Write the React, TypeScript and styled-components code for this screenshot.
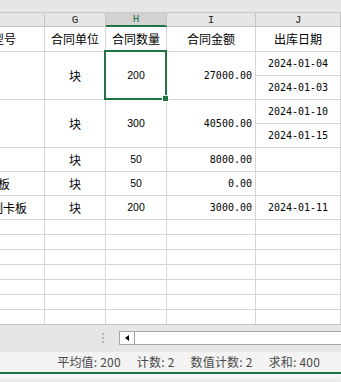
import styled, { createGlobalStyle } from "styled-components"

const GlobalStyle = createGlobalStyle`
    html, body {
        margin: 0;
        padding: 0;
        background: #ffffff;
    }
    body {
        overflow: hidden;
    }
`

const Window = styled.div`
    width: 341px;
    height: 382px;
    display: flex;
    flex-direction: column;
    overflow: hidden;
    background: #ffffff;
`

const TopStrip = styled.div`
    flex: none;
    height: 12px;
    background: #e6e6e6;
    border-bottom: 1px solid #c8c8c8;
`

const GridViewport = styled.div`
    flex: 1;
    min-height: 0;
    overflow: hidden;
`

const Sheet = styled.div`
    display: grid;
    grid-template-columns: 80px 61px 61px 89px 85px;
    grid-template-rows: 14px 25px repeat(7, 24px) repeat(8, 15px);
    margin-left: -35px;
`

const ColHead = styled.div<{ $active?: boolean }>`
    box-sizing: border-box;
    display: flex;
    align-items: center;
    justify-content: center;
    padding-top: 1px;
    background: ${p => (p.$active ? "#d2d2d2" : "#e6e6e6")};
    color: ${p => (p.$active ? "#217346" : "#262626")};
    border-right: 1px solid #c4c4c4;
    border-bottom: ${p => (p.$active ? "2px solid #217346" : "1px solid #c4c4c4")};
    font-family: "Liberation Mono", monospace;
    font-size: 11px;
    line-height: 1;
`

type Kind = "cjk" | "mono" | "sans"

const fonts: Record<Kind, string> = {
    cjk: `12px "Noto Sans CJK SC", sans-serif`,
    mono: `10px "DejaVu Sans Mono", monospace`,
    sans: `10.5px "Liberation Sans", sans-serif`,
}

const Cell = styled.div<{ $rows?: number; $align?: "start" | "center" | "end"; $kind?: Kind; $inset?: number }>`
    box-sizing: border-box;
    grid-row: span ${p => p.$rows ?? 1};
    display: flex;
    align-items: center;
    justify-content: ${p => (p.$align === "end" ? "flex-end" : p.$align === "start" ? "flex-start" : "center")};
    padding: 0 ${p => p.$inset ?? 3}px 0 3px;
    border-right: 1px solid #d4d4d4;
    border-bottom: 1px solid #d4d4d4;
    white-space: nowrap;
    overflow: hidden;
    color: #000000;
    font: ${p => fonts[p.$kind ?? "cjk"]};
    line-height: 1;
`

const SelectedCell = styled(Cell)`
    position: relative;
    z-index: 2;
    overflow: visible;

    &::after {
        content: "";
        position: absolute;
        left: -2px;
        top: -2px;
        right: -1px;
        bottom: -1px;
        border: 2px solid #217346;
        pointer-events: none;
    }

    &::before {
        content: "";
        position: absolute;
        right: -2px;
        bottom: -2px;
        width: 5px;
        height: 5px;
        background: #217346;
        box-shadow: 0 0 0 1px #ffffff;
        z-index: 1;
    }
`

const ScrollArea = styled.div`
    flex: none;
    box-sizing: border-box;
    height: 28px;
    display: flex;
    align-items: flex-start;
    padding: 6px 0 0 102px;
    gap: 15px;
    background: #e6e6e6;
    border-top: 1px solid #c4c4c4;
`

const Splitter = styled.div`
    flex: none;
    width: 2px;
    height: 10px;
    margin-top: 2px;
    background: linear-gradient(
        to bottom,
        #b4b4b4 0 2px,
        transparent 2px 4px,
        #b4b4b4 4px 6px,
        transparent 6px 8px,
        #b4b4b4 8px 10px
    );
`

const ScrollTrack = styled.div`
    flex: 1;
    box-sizing: border-box;
    height: 14px;
    display: flex;
    background: #ffffff;
    border: 1px solid #a6a6a6;
    border-right: none;
`

const ArrowButton = styled.div`
    flex: none;
    width: 14px;
    display: flex;
    align-items: center;
    justify-content: center;
    border-right: 1px solid #a6a6a6;

    &::before {
        content: "";
        width: 0;
        height: 0;
        border-top: 3px solid transparent;
        border-bottom: 3px solid transparent;
        border-right: 4px solid #000000;
    }
`

const StatusBar = styled.div`
    flex: none;
    height: 20px;
    display: flex;
    align-items: center;
    justify-content: flex-end;
    gap: 16px;
    padding-right: 21px;
    background: #f3f3f3;
    color: #4a4a4a;
    font-family: "Noto Sans CJK SC", sans-serif;
    font-size: 12px;
    letter-spacing: 0.2px;
    line-height: 1;
`

const BottomEdge = styled.div`
    flex: none;
    height: 8px;
    border-top: 2px solid #217346;
    background: linear-gradient(to bottom, #fbfbfb, #e9e9e9);
`

const emptyCells = Array.from({ length: 8 * 5 }, (_, i) => i)

export default function App() {
    return (
        <>
            <GlobalStyle />
            <Window>
                <TopStrip />
                <GridViewport>
                    <Sheet>
                        <ColHead />
                        <ColHead>G</ColHead>
                        <ColHead $active>H</ColHead>
                        <ColHead>I</ColHead>
                        <ColHead>J</ColHead>

                        <Cell $inset={28} $align="end">规格型号</Cell>
                        <Cell>合同单位</Cell>
                        <Cell>合同数量</Cell>
                        <Cell>合同金额</Cell>
                        <Cell>出库日期</Cell>

                        <Cell $rows={2} />
                        <Cell $rows={2}>块</Cell>
                        <SelectedCell $rows={2} $kind="sans">200</SelectedCell>
                        <Cell $rows={2} $kind="mono" $align="end">27000.00</Cell>
                        <Cell $kind="mono">2024-01-04</Cell>
                        <Cell $kind="mono">2024-01-03</Cell>

                        <Cell $rows={2} />
                        <Cell $rows={2}>块</Cell>
                        <Cell $rows={2} $kind="sans">300</Cell>
                        <Cell $rows={2} $kind="mono" $align="end">40500.00</Cell>
                        <Cell $kind="mono">2024-01-10</Cell>
                        <Cell $kind="mono">2024-01-15</Cell>

                        <Cell />
                        <Cell>块</Cell>
                        <Cell $kind="sans">50</Cell>
                        <Cell $kind="mono" $align="end">8000.00</Cell>
                        <Cell />

                        <Cell $inset={34} $align="end">塑料托板</Cell>
                        <Cell>块</Cell>
                        <Cell $kind="sans">50</Cell>
                        <Cell $kind="mono" $align="end">0.00</Cell>
                        <Cell />

                        <Cell $inset={17} $align="end">钢制卡板</Cell>
                        <Cell>块</Cell>
                        <Cell $kind="sans">200</Cell>
                        <Cell $kind="mono" $align="end">3000.00</Cell>
                        <Cell $kind="mono">2024-01-11</Cell>

                        {emptyCells.map(i => (
                            <Cell key={i} />
                        ))}
                    </Sheet>
                </GridViewport>
                <ScrollArea>
                    <Splitter />
                    <ScrollTrack>
                        <ArrowButton />
                    </ScrollTrack>
                </ScrollArea>
                <StatusBar>
                    <span>平均值: 200</span>
                    <span>计数: 2</span>
                    <span>数值计数: 2</span>
                    <span>求和: 400</span>
                </StatusBar>
                <BottomEdge />
            </Window>
        </>
    )
}
